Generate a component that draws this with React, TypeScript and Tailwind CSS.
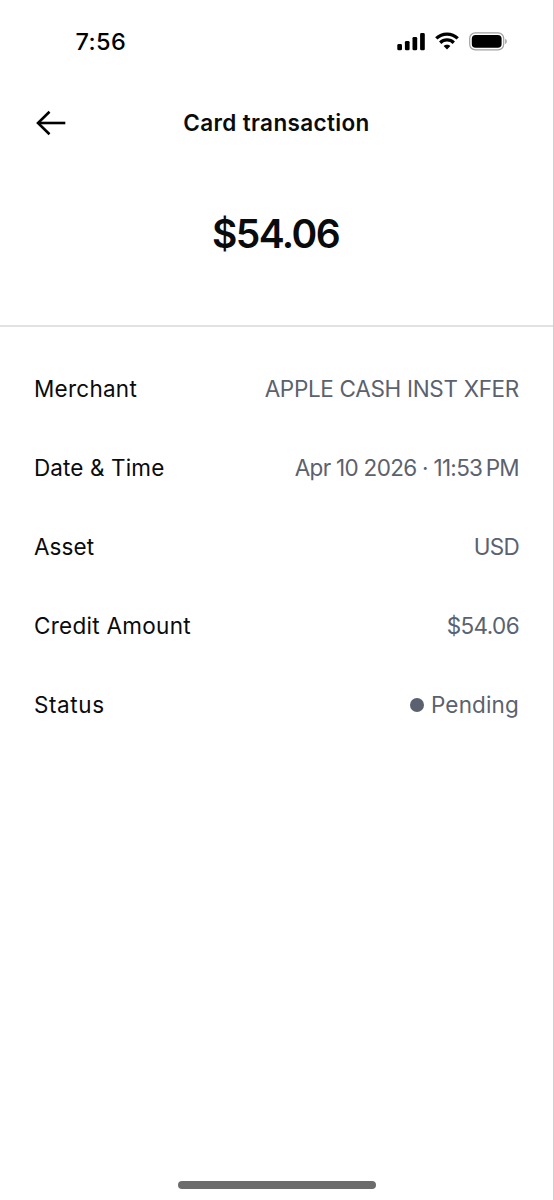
interface DetailRow {
  label: string;
  value: string;
  labelClass: string;
  valueClass: string;
  dot?: boolean;
}

// the time and "PM" are separated by a thin space
const rows: DetailRow[] = [
  { label: 'Merchant', value: 'APPLE CASH INST XFER', labelClass: 'tracking-[0.25px]', valueClass: 'tracking-[-0.32px]' },
  { label: 'Date & Time', value: 'Apr 10 2026 · 11:53\u2009PM', labelClass: 'tracking-[0.12px]', valueClass: 'tracking-[-0.7px]' },
  { label: 'Asset', value: 'USD', labelClass: 'tracking-[0.1px]', valueClass: 'tracking-[-0.7px]' },
  { label: 'Credit Amount', value: '$54.06', labelClass: 'tracking-[0.28px]', valueClass: 'tracking-[-0.6px]' },
  { label: 'Status', value: 'Pending', labelClass: 'tracking-[0.6px]', valueClass: 'tracking-[0.15px]', dot: true },
];

function SignalIcon() {
  return (
    <svg width="29" height="19" viewBox="0 0 29 19" fill="black">
      <rect x="0.3" y="12" width="4.7" height="6.3" rx="1.4" />
      <rect x="7.9" y="8.9" width="4.7" height="9.4" rx="1.4" />
      <rect x="15.5" y="4.9" width="4.7" height="13.4" rx="1.4" />
      <rect x="23.1" y="1" width="4.7" height="17.3" rx="1.4" />
    </svg>
  );
}

function WifiIcon() {
  return (
    <svg width="24" height="18" viewBox="0 0 24 18" fill="none" stroke="black" strokeWidth="3.3">
      <path d="M1.3 6.4C7.2 0.6 16.8 0.6 22.7 6.4" />
      <path d="M5.2 10.7C9 7 15 7 18.8 10.7" />
      <path d="M12 17.6L8.6 14.1C10.5 12.3 13.5 12.3 15.4 14.1Z" fill="black" stroke="none" />
    </svg>
  );
}

function BatteryIcon() {
  return (
    <svg width="39" height="19" viewBox="0 0 39 19">
      <rect x="0.7" y="0.9" width="34" height="17" rx="5.6" fill="none" stroke="#a0a0a0" strokeWidth="1.2" />
      <rect x="2.8" y="3" width="29.8" height="12.8" rx="3.8" fill="black" />
      <path d="M36.2 6.7C38.3 7.6 38.3 11.2 36.2 12.1Z" fill="#a0a0a0" />
    </svg>
  );
}

function StatusBar() {
  return (
    <div className="flex h-[82px] items-center justify-between pr-[45px] pl-[75.5px]">
      <span className="pt-[2px] text-[23.5px] font-medium tracking-[0.4px] text-black">7:56</span>
      <div className="flex items-center">
        <SignalIcon />
        <span className="mr-[10px] ml-[9px]">
          <WifiIcon />
        </span>
        <BatteryIcon />
      </div>
    </div>
  );
}

export default function App() {
  return (
    <div className="flex h-[1200px] w-[554px] flex-col border-r border-[#cfcfcf] bg-white font-['Inter','Liberation_Sans',sans-serif] text-[#0a0b0d]">
      <StatusBar />

      <header className="grid h-[82px] grid-cols-[120px_1fr_120px] items-center">
        <button className="pb-[1px] pl-[35px]" aria-label="Back">
          <svg width="32" height="26" viewBox="0 0 32 26" fill="none" stroke="black" strokeWidth="2.6">
            <path d="M30.3 13H3" />
            <path d="M14.5 1.8L3 13L14.5 24.2" />
          </svg>
        </button>
        <h1 className="text-center text-[22.5px] font-semibold tracking-[0.35px] whitespace-nowrap">Card transaction</h1>
      </header>

      <div className="flex h-[163px] items-center justify-center border-b-2 border-[#e1e2e4] pr-[2px] pb-[21px]">
        <span className="text-[39px] font-semibold tracking-[-1.6px]">$54.06</span>
      </div>

      <dl className="flex flex-col pt-[23px] pr-[34px] pl-[34px] text-[22.5px] whitespace-nowrap">
        {rows.map((row) => (
          <div key={row.label} className="flex h-[79px] items-center justify-between pb-[1px]">
            <dt className={row.labelClass}>{row.label}</dt>
            <dd className="flex items-center text-[#5b616e]">
              {row.dot && <span className="mr-[7px] size-[14px] rounded-full bg-[#5b616e]" />}
              <span className={row.valueClass}>{row.value}</span>
            </dd>
          </div>
        ))}
      </dl>

      <div className="mx-auto mt-auto mb-[11px] h-2 w-[198px] rounded-full bg-[#6c6c6c]" />
    </div>
  );
}
